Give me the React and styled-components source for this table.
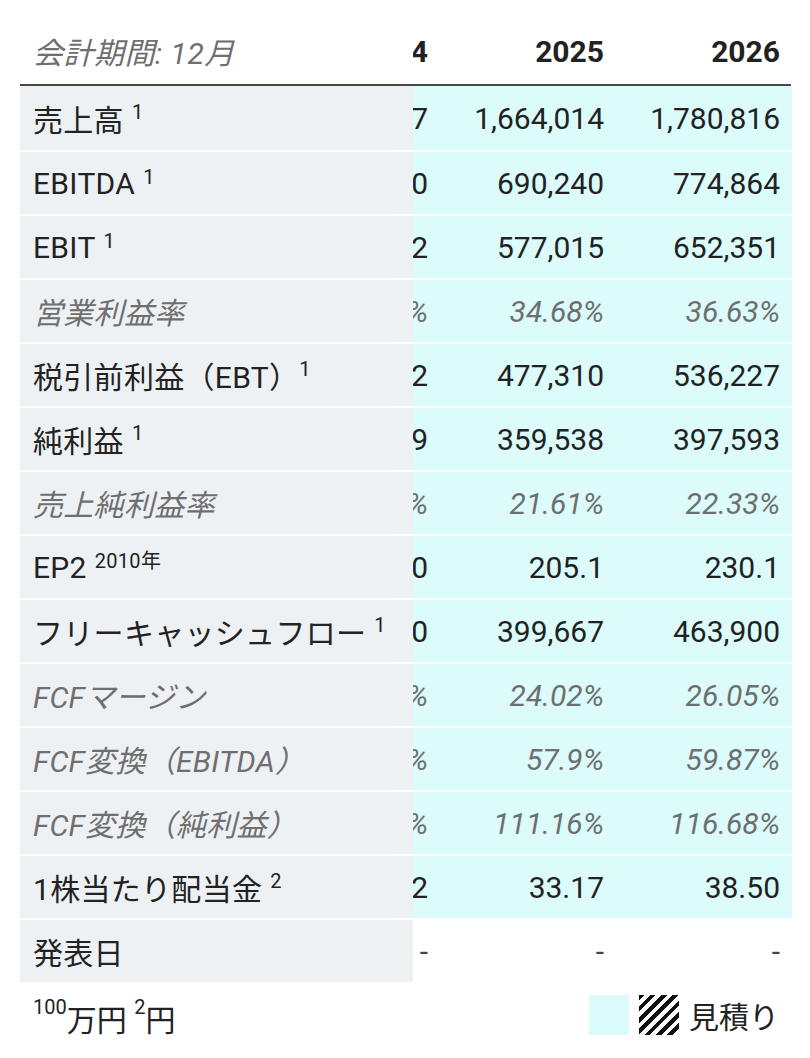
import styled, { createGlobalStyle } from "styled-components";

const Global = createGlobalStyle`
  body {
    margin: 0;
    background: #ffffff;
    font-family: Roboto, "Noto Sans CJK JP", sans-serif;
    color: #222222;
  }
`

const Pagina = styled.div`
  width: 810px;
  padding: 0 19px 0 20px;
  box-sizing: border-box;
`

const Linha = styled.div`
  display: grid;
  grid-template-columns: 393px 27px 176px 176px;
  height: ${(p) => (p.$cabecalho ? "86px" : "64px")};
  box-sizing: border-box;
  border-bottom: ${(p) => (p.$cabecalho ? "2px solid #474747" : "none")};
  border-top: ${(p) => (p.$separador ? "2px solid rgba(255,255,255,0.55)" : "none")};
`

const Rotulo = styled.div`
  display: flex;
  align-items: center;
  padding-left: 13px;
  background: ${(p) => (p.$cabecalho ? "transparent" : "#eef1f4")};
  font-size: 30px;
  letter-spacing: ${(p) => (p.$cabecalho ? "0.5px" : "0.3px")};
  white-space: nowrap;
  color: ${(p) => (p.$italico ? "#6f6f6f" : "#222222")};
  font-style: ${(p) => (p.$italico ? "italic" : "normal")};
  padding-top: ${(p) => (p.$cabecalho ? "18px" : "0")};
  position: relative;
  z-index: 1;
`

const Celula = styled.div`
  display: flex;
  align-items: center;
  justify-content: flex-end;
  padding-right: 12px;
  overflow: hidden;
  white-space: nowrap;
  background: ${(p) => (p.$estimativa ? "#dcfbfb" : "transparent")};
  font-size: 30px;
  font-weight: ${(p) => (p.$cabecalho ? 700 : 400)};
  color: ${(p) => (p.$italico ? "#6f6f6f" : p.$vazio ? "#444444" : "#222222")};
  font-style: ${(p) => (p.$italico ? "italic" : "normal")};
  padding-top: ${(p) => (p.$cabecalho ? "18px" : "0")};
`

const Sobrescrito = styled.sup`
  font-size: 20px;
  margin-left: ${(p) => (p.$junto ? "0" : "8px")};
  position: relative;
  top: -6px;
  line-height: 0;
`

const Rodape = styled.div`
  display: flex;
  justify-content: space-between;
  align-items: center;
  padding: 8px 12px 0 13px;
  font-size: 30px;
`

const Notas = styled.div`
  padding-top: 6px;
  color: #222222;
`

const Legenda = styled.div`
  display: flex;
  align-items: center;
  gap: 10px;
`

const Quadrado = styled.span`
  width: 40px;
  height: 40px;
  display: inline-block;
  background: ${(p) =>
    p.$listras
      ? "repeating-linear-gradient(135deg, #111 0 4px, #fff 4px 8px)"
      : "#dcfbfb"};
`

const linhas = [
  { rotulo: "売上高", nota: "1", valores: ["1,538,977", "1,664,014", "1,780,816"] },
  { rotulo: "EBITDA", nota: "1", valores: ["612,480", "690,240", "774,864"] },
  { rotulo: "EBIT", nota: "1", valores: ["508,102", "577,015", "652,351"] },
  { rotulo: "営業利益率", italico: true, valores: ["33.02%", "34.68%", "36.63%"] },
  { rotulo: "税引前利益（EBT）", nota: "1", valores: ["421,542", "477,310", "536,227"] },
  { rotulo: "純利益", nota: "1", valores: ["318,209", "359,538", "397,593"] },
  { rotulo: "売上純利益率", italico: true, valores: ["20.68%", "21.61%", "22.33%"] },
  { rotulo: "EP2", nota: "2010年", valores: ["181.0", "205.1", "230.1"] },
  { rotulo: "フリーキャッシュフロー", nota: "1", valores: ["352,110", "399,667", "463,900"] },
  { rotulo: "FCFマージン", italico: true, valores: ["22.88%", "24.02%", "26.05%"] },
  { rotulo: "FCF変換（EBITDA）", italico: true, valores: ["57.49%", "57.9%", "59.87%"] },
  { rotulo: "FCF変換（純利益）", italico: true, valores: ["110.65%", "111.16%", "116.68%"] },
  { rotulo: "1株当たり配当金", nota: "2", valores: ["29.12", "33.17", "38.50"] },
  { rotulo: "発表日", vazio: true, valores: ["-", "-", "-"] },
]

export default function App() {
  return (
    <>
      <Global />
      <Pagina>
        <Linha $cabecalho>
          <Rotulo $cabecalho $italico>会計期間: 12月</Rotulo>
          <Celula $cabecalho>2024</Celula>
          <Celula $cabecalho>2025</Celula>
          <Celula $cabecalho>2026</Celula>
        </Linha>
        {linhas.map((l, i) => (
          <Linha key={l.rotulo} $separador={i > 0}>
            <Rotulo $italico={l.italico}>
              {l.rotulo}
              {l.nota && <Sobrescrito $junto={l.rotulo.endsWith("）")}>{l.nota}</Sobrescrito>}
            </Rotulo>
            {l.valores.map((v, j) => (
              <Celula key={j} $estimativa={!l.vazio} $italico={l.italico} $vazio={l.vazio}>
                {v}
              </Celula>
            ))}
          </Linha>
        ))}
        <Rodape>
          <Notas>
            <Sobrescrito $junto>100</Sobrescrito>万円 <Sobrescrito $junto>2</Sobrescrito>円
          </Notas>
          <Legenda>
            <Quadrado />
            <Quadrado $listras />
            <span>見積り</span>
          </Legenda>
        </Rodape>
      </Pagina>
    </>
  )
}
